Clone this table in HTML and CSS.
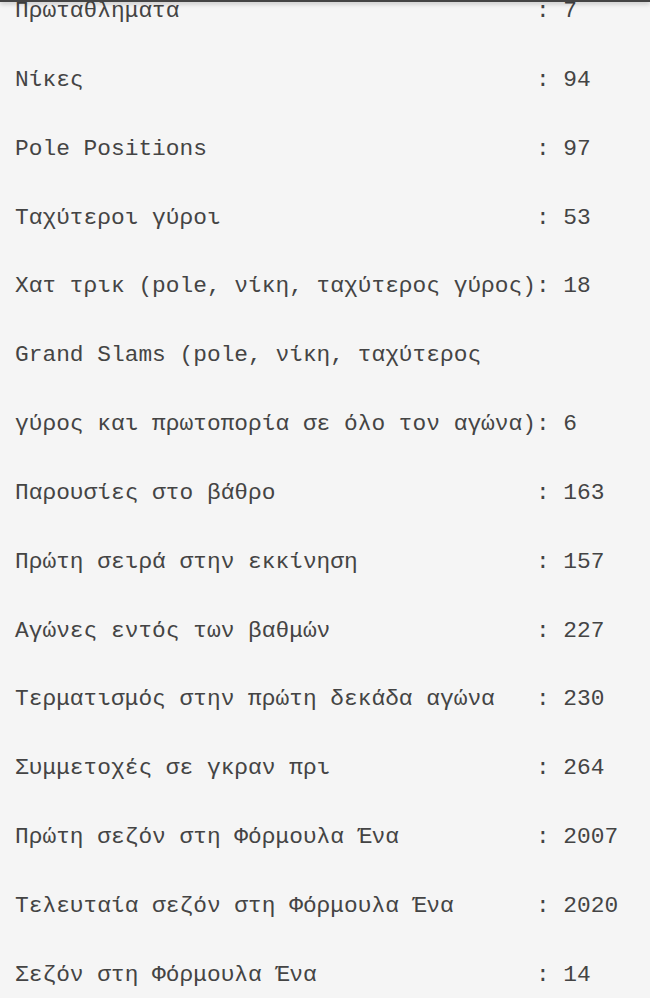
FILE: index.html
```html
<!DOCTYPE html>
<html lang="el">
<head>
<meta charset="utf-8">
<title>Στατιστικά</title>
<link rel="stylesheet" href="styles.css">
</head>
<body>
<div class="topbar"></div>
<div class="stats">
<div class="row">Πρωταθληματα                          : 7</div>
<div class="row">Νίκες                                 : 94</div>
<div class="row">Pole Positions                        : 97</div>
<div class="row">Ταχύτεροι γύροι                       : 53</div>
<div class="row">Χατ τρικ (pole, νίκη, ταχύτερος γύρος): 18</div>
<div class="row">Grand Slams (pole, νίκη, ταχύτερος</div>
<div class="row">γύρος και πρωτοπορία σε όλο τον αγώνα): 6</div>
<div class="row">Παρουσίες στο βάθρο                   : 163</div>
<div class="row">Πρώτη σειρά στην εκκίνηση             : 157</div>
<div class="row">Αγώνες εντός των βαθμών               : 227</div>
<div class="row">Τερματισμός στην πρώτη δεκάδα αγώνα   : 230</div>
<div class="row">Συμμετοχές σε γκραν πρι               : 264</div>
<div class="row">Πρώτη σεζόν στη Φόρμουλα Ένα          : 2007</div>
<div class="row">Τελευταία σεζόν στη Φόρμουλα Ένα      : 2020</div>
<div class="row">Σεζόν στη Φόρμουλα Ένα                : 14</div>
</div>
</body>
</html>
```
FILE: styles.css
```css
html, body {
  margin: 0;
  padding: 0;
  background: #f5f5f5;
  overflow: hidden;
}

.topbar {
  position: fixed;
  top: 0;
  left: 0;
  right: 0;
  height: 2px;
  background: #444444;
  box-shadow: 0 1px 5px rgba(0, 0, 0, 0.4);
  z-index: 2;
}

.stats {
  margin-top: -23px;
  padding-left: 15px;
  font-family: "Liberation Mono", "DejaVu Sans Mono", monospace;
  font-size: 22.85px;
  color: #444444;
}

.row {
  white-space: pre;
  line-height: 68.85px;
  height: 68.85px;
}
```
